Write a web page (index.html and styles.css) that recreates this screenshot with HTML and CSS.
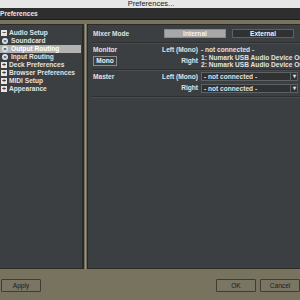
FILE: index.html
```html
<!DOCTYPE html>
<html lang="en">
<head>
    <meta charset="UTF-8">
    <title>Preferences</title>
    <link rel="stylesheet" href="styles.css">
</head>
<body>

    <div class="titlebar">Preferences...</div>
    <div class="header">Preferences</div>

    <div class="main">
        <div class="tree">
            <div class="node"><span class="box">&minus;</span>Audio Setup</div>
            <div class="node child"><span class="dot">&times;</span>Soundcard</div>
            <div class="node child selected"><span class="dot">&times;</span>Output Routing</div>
            <div class="node child"><span class="dot">&times;</span>Input Routing</div>
            <div class="node"><span class="box">+</span>Deck Preferences</div>
            <div class="node"><span class="box">+</span>Browser Preferences</div>
            <div class="node"><span class="box">+</span>MIDI Setup</div>
            <div class="node"><span class="box">+</span>Appearance</div>
        </div>

        <div class="split"></div>

        <div class="content">
            <div class="row mode">
                <span class="label">Mixer Mode</span>
                <button class="toggle on">Internal</button>
                <button class="toggle">External</button>
            </div>

            <div class="row routing">
                <span class="label">Monitor</span>
                <span class="side">Left (Mono)</span>
                <span class="value">- not connected -</span>
                <button class="mono">Mono</button>
                <span class="side right">Right</span>
                <div class="list">
                    <div>1: Numark USB Audio Device Out</div>
                    <div>2: Numark USB Audio Device Out</div>
                </div>
            </div>

            <div class="row routing">
                <span class="label">Master</span>
                <span class="side">Left (Mono)</span>
                <div class="select">- not connected -<span class="arrow">&#9662;</span></div>
                <span></span>
                <span class="side">Right</span>
                <div class="select">- not connected -<span class="arrow">&#9662;</span></div>
            </div>
        </div>
    </div>

    <div class="footer">
        <button class="btn">Apply</button>
        <span class="spacer"></span>
        <button class="btn">OK</button>
        <button class="btn">Cancel</button>
    </div>

</body>
</html>
```

FILE: styles.css
```css
* {
    box-sizing: border-box;
}

body {
    margin: 0;
    width: 300px;
    height: 300px;
    overflow: hidden;
    font-family: "Liberation Sans", Arial, sans-serif;
    font-size: 6.6px;
    font-weight: bold;
    color: #e2e2e2;
    background: #77735f;
    display: flex;
    flex-direction: column;
}

.titlebar {
    height: 8px;
    background: #e6e6e6;
    color: #222;
    font-weight: normal;
    font-size: 7.5px;
    line-height: 8px;
    text-align: center;
    padding-left: 2px;
}

.header {
    height: 12px;
    background: #2e2e2e;
    border-bottom: 1px solid #1c1c1c;
    color: #e8e8e8;
    line-height: 12px;
    padding-left: 0;
}

.main {
    height: 251px;
    display: flex;
    padding: 4px 0 2px;
}

.tree {
    width: 87px;
    background: #3c3f41;
    border: 1px solid #2a2b27;
    border-left: none;
    padding-top: 4px;
}

.node {
    height: 8px;
    line-height: 8px;
    display: flex;
    align-items: center;
    white-space: nowrap;
}

.node.selected {
    background: #b3b3b1;
    color: #fff;
    margin-right: 1px;
}

.box {
    width: 6px;
    height: 6px;
    margin: 0 2px 0 1px;
    border: 1px solid #e6e6e6;
    background: #e6e6e6;
    color: #3c3f41;
    font-size: 7px;
    line-height: 4px;
    text-align: center;
    overflow: hidden;
}

.dot {
    width: 6px;
    height: 6px;
    margin: 0 3px 0 2px;
    border-radius: 50%;
    background: #e6e6e6;
    color: #3c3f41;
    font-size: 6px;
    line-height: 6px;
    text-align: center;
}

.split {
    width: 5px;
    border-left: 1px solid #2a2b27;
    border-right: 1px solid #2a2b27;
    background: linear-gradient(90deg, #6d6a5a 0 1px, #9a978a 1px 2px, #6d6a5a 2px);
}

.content {
    flex: 1;
    background: #3c3f41;
    border-top: 1px solid #2a2b27;
    border-bottom: 1px solid #2a2b27;
    padding-left: 4px;
}

.row {
    border-bottom: 1px solid #2c2e30;
    box-shadow: 0 1px 0 #4a4d50;
}

.mode {
    height: 18px;
    display: flex;
    align-items: center;
    padding-left: 1px;
}

.mode .label {
    width: 71px;
}

.toggle {
    width: 62px;
    height: 9px;
    margin-right: 6px;
    padding: 0;
    font: inherit;
    color: #f2f2f2;
    background: #2f3133;
    border: 1px solid #5e6163;
    line-height: 7px;
}

.toggle.on {
    background: #a8a8a8;
    border-color: #8a8a8a;
}

.routing {
    height: 27px;
    display: grid;
    grid-template-columns: 66px 36px 1fr;
    grid-template-rows: 9px 14px;
    column-gap: 3px;
    align-items: center;
    padding: 2px 0 0 1px;
    line-height: 8px;
}

.side {
    text-align: right;
}

.routing .value {
    white-space: nowrap;
}

.mono {
    width: 24px;
    height: 10px;
    padding: 0;
    font: inherit;
    color: #f0f0f0;
    background: #3c3f41;
    border: 1px solid #8a8c8e;
    line-height: 8px;
}

.list {
    white-space: nowrap;
    overflow: hidden;
    line-height: 7px;
}

.select {
    position: relative;
    height: 9px;
    margin-right: 2px;
    padding-left: 2px;
    background: #2f3133;
    border: 1px solid #5e6163;
    line-height: 7px;
    white-space: nowrap;
}

.arrow {
    position: absolute;
    right: 0;
    top: 0;
    width: 7px;
    height: 7px;
    border-left: 1px solid #5e6163;
    text-align: center;
    font-size: 6px;
}

.footer {
    flex: 1;
    display: flex;
    align-items: center;
    gap: 4px;
    padding: 0 0 0 1px;
}

.spacer {
    flex: 1;
}

.btn {
    width: 40px;
    height: 13px;
    padding: 0;
    font: inherit;
    font-weight: normal;
    color: #1c1c1c;
    background: #7a7664;
    border: 1px solid #3f3d33;
    border-radius: 1px;
}
```
